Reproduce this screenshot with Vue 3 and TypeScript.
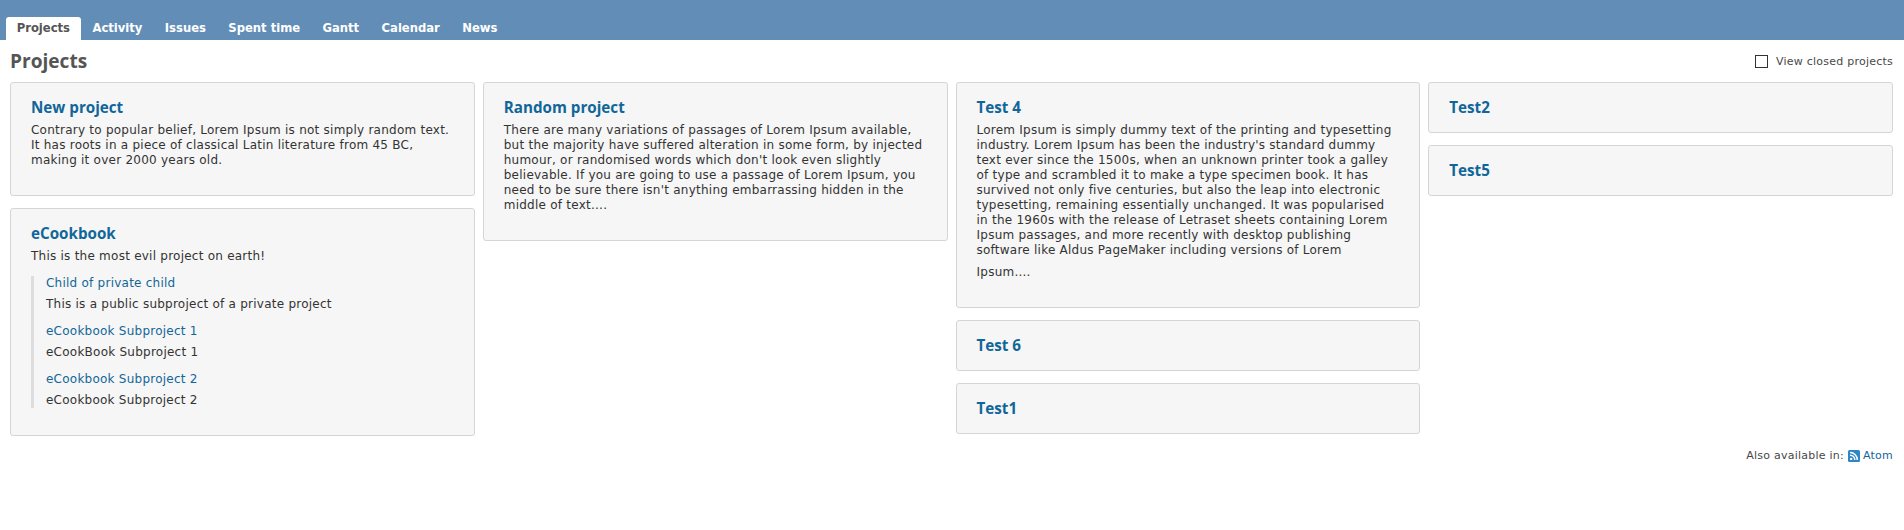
<script setup lang="ts">
const tabs: string[] = ['Projects', 'Activity', 'Issues', 'Spent time', 'Gantt', 'Calendar', 'News']
</script>

<template>
  <div class="page">
    <header class="top">
      <nav class="tabs">
        <a v-for="(t, i) in tabs" :key="t" class="tab" :class="{ active: i === 0 }">{{ t }}</a>
      </nav>
    </header>
    <main class="content">
      <div class="head">
        <h2>Projects</h2>
        <label class="closed"><span class="check"></span>View closed projects</label>
      </div>
      <div class="columns">
        <div class="col">
          <section class="card text">
            <a class="title">New project</a>
            <p>Contrary to popular belief, Lorem Ipsum is not simply random text.<br>It has roots in a piece of classical Latin literature from 45 BC,<br>making it over 2000 years old.</p>
          </section>
          <section class="card text">
            <a class="title">eCookbook</a>
            <p>This is the most evil project on earth!</p>
            <div class="subs">
              <div class="sub"><a>Child of private child</a><p>This is a public subproject of a private project</p></div>
              <div class="sub"><a>eCookbook Subproject 1</a><p>eCookBook Subproject 1</p></div>
              <div class="sub"><a>eCookbook Subproject 2</a><p>eCookbook Subproject 2</p></div>
            </div>
          </section>
        </div>
        <div class="col">
          <section class="card text">
            <a class="title">Random project</a>
            <p>There are many variations of passages of Lorem Ipsum available,<br>but the majority have suffered alteration in some form, by injected<br>humour, or randomised words which don't look even slightly<br>believable. If you are going to use a passage of Lorem Ipsum, you<br>need to be sure there isn't anything embarrassing hidden in the<br>middle of text....</p>
          </section>
        </div>
        <div class="col">
          <section class="card text">
            <a class="title">Test 4</a>
            <p>Lorem Ipsum is simply dummy text of the printing and typesetting<br>industry. Lorem Ipsum has been the industry's standard dummy<br>text ever since the 1500s, when an unknown printer took a galley<br>of type and scrambled it to make a type specimen book. It has<br>survived not only five centuries, but also the leap into electronic<br>typesetting, remaining essentially unchanged. It was popularised<br>in the 1960s with the release of Letraset sheets containing Lorem<br>Ipsum passages, and more recently with desktop publishing<br>software like Aldus PageMaker including versions of Lorem</p>
            <p class="tail">Ipsum....</p>
          </section>
          <section class="card"><a class="title">Test 6</a></section>
          <section class="card"><a class="title">Test1</a></section>
        </div>
        <div class="col">
          <section class="card"><a class="title">Test2</a></section>
          <section class="card"><a class="title">Test5</a></section>
        </div>
      </div>
      <div class="other">
        <span>Also available in:</span>
        <svg class="rss" viewBox="0 0 12 12" width="12" height="12" aria-hidden="true">
          <rect width="12" height="12" rx="1.5" fill="#2f86c6" />
          <circle cx="3.2" cy="8.9" r="1.2" fill="#fff" />
          <path d="M2 5.2a4.8 4.8 0 0 1 4.8 4.8M2 2.6A7.4 7.4 0 0 1 9.4 10" fill="none" stroke="#fff" stroke-width="1.5" />
        </svg>
        <a>Atom</a>
      </div>
    </main>
  </div>
</template>

<style>
html, body { margin: 0; background: #fff; }
</style>

<style scoped>
.page {
  font-family: "DejaVu Sans", Verdana, sans-serif;
  font-size: 12px;
  letter-spacing: 0.24px;
  line-height: 15px;
  color: #333;
  min-height: 530px;
}
.top {
  background: #628db6;
  height: 40px;
  display: flex;
  align-items: flex-end;
  padding-left: 6px;
}
.tabs { display: flex; gap: 1px; }
.tab {
  font-size: 11.6px;
  letter-spacing: 0;
  font-weight: 700;
  color: #fff;
  height: 23px;
  line-height: 23px;
  padding: 0 10.7px;
  border-radius: 3px 3px 0 0;
}
.tab.active { background: #fff; color: #555; }
.content { padding: 0 11px 0 10px; }
.head {
  display: flex;
  justify-content: space-between;
  align-items: center;
  height: 42px;
}
h2 {
  margin: 0;
  font-family: "Open Sans", sans-serif;
  font-size: 19.1px;
  letter-spacing: 0;
  font-weight: 700;
  color: #555;
}
.closed {
  display: flex;
  align-items: center;
  font-size: 11px;
  letter-spacing: 0.24px;
  color: #484848;
}
.check {
  box-sizing: border-box;
  width: 13px;
  height: 13px;
  border: 1px solid #333;
  margin-right: 8px;
}
.columns {
  display: grid;
  grid-template-columns: repeat(4, 1fr);
  gap: 8px;
  align-items: start;
}
.col { display: flex; flex-direction: column; gap: 12px; }
.card {
  box-sizing: border-box;
  background: #f6f6f6;
  border: 1px solid #d5d5d5;
  border-radius: 3px;
  padding: 14px 20px 15px;
}
.card.text { padding-bottom: 27px; }
.title {
  display: block;
  font-family: "Open Sans", sans-serif;
  font-size: 15.2px;
  letter-spacing: 0;
  font-weight: 700;
  line-height: 20px;
  color: #169;
}
.card p { margin: 0; white-space: nowrap; }
.title + p { margin-top: 6px; }
.card .tail { margin-top: 7px; }
.subs {
  border-left: 3px solid #ddd;
  padding-left: 12px;
  display: flex;
  flex-direction: column;
  gap: 12px;
  margin-top: 12px;
}
.sub a { color: #169; display: block; }
.sub p { margin-top: 6px; }
.other {
  display: flex;
  justify-content: flex-end;
  align-items: center;
  font-size: 11px;
  letter-spacing: 0.24px;
  color: #484848;
  margin-top: 12px;
}
.other a { color: #169; }
.rss { margin: 0 3px 0 4px; }
</style>
